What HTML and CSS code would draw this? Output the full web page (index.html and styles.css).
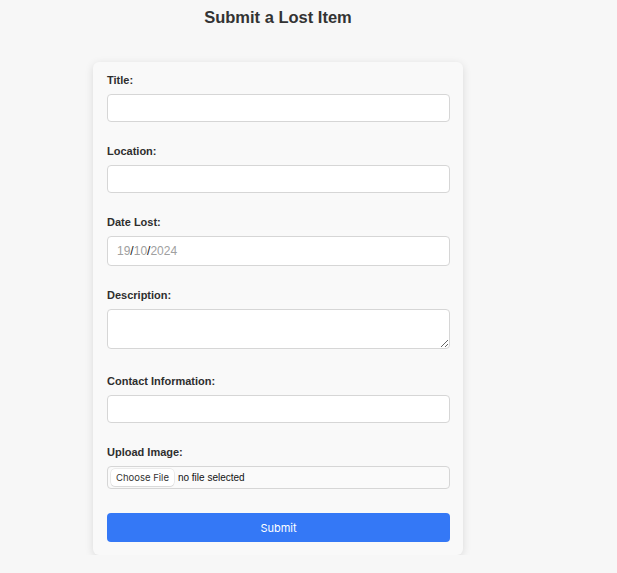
FILE: index.html
```html
<!DOCTYPE html>
<html lang="en">
<head>
    <meta charset="UTF-8">
    <meta name="viewport" content="width=device-width, initial-scale=1.0">
    <title>Submit a Lost Item</title>
<link rel="stylesheet" href="styles.css">
</head>
<body>
    <div class="page">
        <h1>Submit a Lost Item</h1>
        <form class="lost-form" onsubmit="return false;">
            <div class="form-group">
                <label for="title">Title:</label>
                <input type="text" id="title" class="form-input">
            </div>
            <div class="form-group">
                <label for="location">Location:</label>
                <input type="text" id="location" class="form-input">
            </div>
            <div class="form-group">
                <label>Date Lost:</label>
                <div class="form-input date-field">
                    <span class="date-part">19</span><span class="date-sep">/</span><span class="date-part">10</span><span class="date-sep">/</span><span class="date-part">2024</span>
                </div>
            </div>
            <div class="form-group form-group-text">
                <label for="description">Description:</label>
                <textarea id="description" class="form-input form-textarea"></textarea>
            </div>
            <div class="form-group">
                <label for="contact">Contact Information:</label>
                <input type="text" id="contact" class="form-input">
            </div>
            <div class="form-group">
                <label>Upload Image:</label>
                <label class="file-field">
                    <input type="file" class="file-hidden">
                    <span class="file-button">Choose File</span>
                    <span class="file-name">no file selected</span>
                </label>
            </div>
            <button type="submit" class="submit-button">Submit</button>
        </form>
    </div>
</body>
</html>
```

FILE: styles.css
```css
/* styles.css */

body {
    font-family: "Liberation Sans", Arial, sans-serif;
    background-color: #f7f7f7;
    margin: 0;
    color: #333;
}

.page {
    width: 370px;
    margin-left: 93px;
}

h1 {
    font-size: 16.5px;
    line-height: 20px;
    text-align: center;
    margin: 7px 0 35px;
    color: #333;
}

.lost-form {
    background-color: #f9f9f9;
    border-radius: 6px;
    box-shadow: 0 2px 8px rgba(0, 0, 0, 0.12);
    padding: 11px 13px 13px 14px;
}

.form-group {
    margin-bottom: 22px;
}

.form-group-text {
    margin-bottom: 25px;
}

.form-group label {
    display: block;
    font-size: 11px;
    line-height: 14px;
    font-weight: bold;
    color: #2e2e2e;
    margin-bottom: 7px;
}

.form-input {
    display: block;
    box-sizing: border-box;
    width: 100%;
    height: 28px;
    padding: 0 9px;
    border: 1px solid #d6d6d6;
    border-radius: 4px;
    background-color: #fff;
    font-family: "Liberation Sans", Arial, sans-serif;
    font-size: 12px;
}

.date-field {
    height: 30px;
    display: flex;
    align-items: center;
}

.date-part {
    color: #a0a0a0;
}

.date-sep {
    color: #111;
}

.form-textarea {
    height: 40px;
    padding: 6px 9px;
    resize: vertical;
}

.form-group label.file-field {
    display: flex;
    align-items: center;
    box-sizing: border-box;
    height: 23px;
    padding: 0 3px;
    margin-bottom: 0;
    border: 1px solid #d6d6d6;
    border-radius: 4px;
    background-color: #fafafa;
    font-weight: normal;
    cursor: pointer;
}

.file-hidden {
    display: none;
}

.file-button {
    font-family: Inter, "Liberation Sans", sans-serif;
    font-size: 9.5px;
    line-height: 15px;
    color: #333;
    background-color: #fff;
    border-radius: 4px;
    box-shadow: 0 0 0 0.5px rgba(0, 0, 0, 0.12), 0 1px 1px rgba(0, 0, 0, 0.08);
    padding: 1px 5px;
}

.file-name {
    font-size: 10px;
    color: #111;
    margin-left: 4px;
}

.submit-button {
    display: block;
    width: 100%;
    height: 29px;
    margin-top: 24px;
    border: none;
    border-radius: 4px;
    background-color: #3478f6;
    color: #fff;
    font-family: Inter, "Liberation Sans", sans-serif;
    font-size: 11px;
    cursor: pointer;
}

.submit-button:hover {
    background-color: #2a6ae0;
}
```
